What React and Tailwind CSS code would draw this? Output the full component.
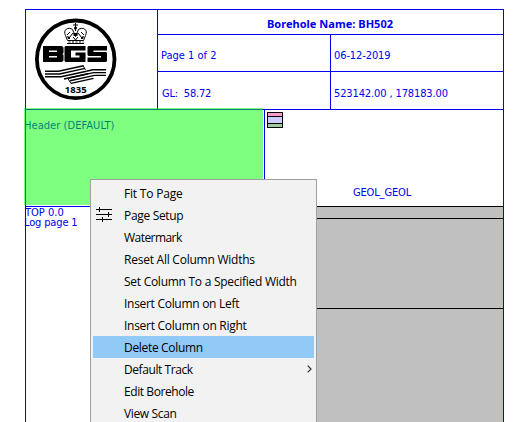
import React from "react";

const menuItems = [
  { label: "Fit To Page", tracking: "tracking-[-0.2px]" },
  { label: "Page Setup", tracking: "tracking-[-0.32px]", icon: true },
  { label: "Watermark", tracking: "tracking-[-0.55px]" },
  { label: "Reset All Column Widths", tracking: "tracking-[-0.24px]" },
  { label: "Set Column To a Specified Width", tracking: "tracking-[-0.27px]" },
  { label: "Insert Column on Left", tracking: "tracking-[-0.29px]" },
  { label: "Insert Column on Right", tracking: "tracking-[-0.27px]" },
  { label: "Delete Column", tracking: "tracking-[-0.32px]", active: true },
  { label: "Default Track", tracking: "tracking-[-0.42px]" , submenu: true },
  { label: "Edit Borehole", tracking: "tracking-[-0.42px]" },
  { label: "View Scan", tracking: "tracking-[-0.36px]" },
];

function Logo() {
  return (
    <svg width="82" height="83" viewBox="0 0 82 83" className="block">
      <circle cx="40.700" cy="41.300" r="38.800" fill="#fff" stroke="#000" strokeWidth="3.800" />
      <g fill="none" stroke="#000" strokeWidth="1">
        <path d="M32 25.500h17M32.500 22.500h16M32.500 22.500l-2-5c-3-6 3-9 7-6l3 7 3-7c4-3 10 0 7 6l-2 5" />
        <path d="M32 17l3-3M34 20l4-5M49 17l-3-3M47 20l-4-5M38 19l2.500 3 2.500-3M40.500 5v8M38 7h5" />
        <path d="M33.500 24h15" strokeDasharray="2 1.500" />
      </g>
      <g fill="#000">
        <circle cx="40.500" cy="10" r="1.500" />
        <path d="M38.500 15h4v3h-4zM32 18l3 1v2h-2zM49 18l-3 1v2h2z" />
      </g>
      <path
        fill="#000"
        fillRule="evenodd"
        d="M8 28h19l1.500 1.500v5.500l-1 1 1 1v5.500L27 44H8zM14 32.500v1.500h8v-1.500zM14 38v1.500h8V38zM30.500 28H50.500v4.500H36v7h8.500v-2h-4V34.500h10V44h-20l-1-1V29zM53.500 28H72v4.500H58.500v1.500h12.500l1 1v8l-1 1H52.500v-4.500H66v-1.500H53.500l-1-1v-8z"
      />
      <g fill="none" stroke="#000" strokeWidth="1.400">
        <path d="M10 53.200h13.500L48.500 47.700M10 56h14.500l25.500-5.600M10 58.800h16l25.500-5.600M29 61l24-5.200" />
        <path d="M71 51.800H57.500L51.500 53.200M71 54.600H58.500L34 60M71 57.400H59.500L35 62.800M36 65.400l22.500-5" />
        <path d="M48 47.500l2.500 4.500M32.500 60l3.500 5.500" strokeWidth="1" />
      </g>
      <text x="40.800" y="75.300" textAnchor="middle" textLength="22" className="font-['Open_Sans',sans-serif] text-[9.500px] font-bold">
        1835
      </text>
    </svg>
  );
}

function SlidersIcon() {
  return (
    <svg width="16" height="15" viewBox="0 0 16 15" className="block" shapeRendering="crispEdges" fill="none" stroke="#000">
      <path d="M0 2.500h16M0 7.500h16M0 12.500h16M3.500 0v5M12.500 5v5M6.500 10v5" />
    </svg>
  );
}

function ContextMenu() {
  return (
    <div className="absolute left-[90px] top-[179px] h-[243px] w-[227px] border border-b-0 border-[#a0a0a0] bg-[#f2f2f2] px-[2px] pt-[2px] font-['Open_Sans',sans-serif] text-[12px] text-black">
      {menuItems.map((item) => (
        <div key={item.label} className={`flex h-[22px] items-center ${item.active ? "bg-[#91c9f7]" : ""}`}>
          <div className="flex w-[31px] shrink-0 pl-[3px] pb-[1px]">{item.icon && <SlidersIcon />}</div>
          <span className={`whitespace-pre pt-[2px] leading-[22px] ${item.tracking}`}>{item.label}</span>
          {item.submenu && (
            <svg width="5" height="8" viewBox="0 0 5 8" className="-mt-[1px] ml-auto mr-[2px]" fill="none" stroke="#333" strokeWidth="1.200">
              <path d="M.7.700L4 4L.7 7.300" />
            </svg>
          )}
        </div>
      ))}
    </div>
  );
}

export default function App() {
  return (
    <div className="relative h-[422px] w-[520px] overflow-hidden bg-white pl-[25px] pt-[9px] font-['DejaVu_Sans_Condensed','DejaVu_Sans',sans-serif] text-[11px] leading-[13px] text-[#0000ee]">
      <div className="h-[413px] w-[479px] border-x border-t border-[#0000ee]">
        <div className="flex h-[100px] border-b border-[#0000ee]">
          <div className="w-[132px] shrink-0 border-r border-[#0000ee] pl-[9px] pt-[8px]">
            <Logo />
          </div>
          <div className="flex flex-1 flex-col">
            <div className="flex h-[25px] items-center justify-center border-b border-[#0000ee] pb-[1px] pt-[4px] font-['Noto_Sans',sans-serif] font-bold">
              <span className="whitespace-pre pr-[1px] tracking-[0.03px]">Borehole Name: BH502</span>
            </div>
            <div className="flex h-[37px] border-b border-[#0000ee]">
              <div className="flex w-[173px] items-center border-r border-[#0000ee] pl-[3px] pt-[4px]">Page 1 of 2</div>
              <div className="flex items-center pl-[3px] pt-[4px] tracking-[-0.1px]">06-12-2019</div>
            </div>
            <div className="flex flex-1">
              <div className="flex w-[173px] items-center whitespace-pre border-r border-[#0000ee] pl-[4px] pt-[5px] tracking-[-0.2px]">GL:  58.72</div>
              <div className="flex items-center whitespace-pre pl-[3px] pt-[5px] tracking-[-0.12px]">523142.00 , 178183.00</div>
            </div>
          </div>
        </div>
        <div className="flex h-[97px]">
          <div className="w-[239px] shrink-0 border-b border-r border-[#0000ee] pt-[9px]">
            <div className="-ml-[2px] whitespace-pre tracking-[0.06px]">Header (DEFAULT)</div>
          </div>
          <div className="flex-1 border-b border-black pl-[2px] pt-[2px]">
            <div className="flex h-[16px] w-[16px] flex-col border border-black">
              <div className="h-[3px] bg-[#ff99cc]" />
              <div className="h-[8px] border-y border-black bg-[#ccccff]" />
              <div className="h-[3px] bg-[#99cc99]" />
            </div>
            <div className="pl-[86px] pt-[58px] tracking-[-0.15px]">GEOL_GEOL</div>
          </div>
        </div>
        <div className="flex h-[215px]">
          <div className="w-[239px] shrink-0 border-r border-[#0000ee] pt-[1px] leading-[10px]">
            <div className="-ml-[1px]">TOP 0.0</div>
            <div className="-ml-[2px] tracking-[-0.15px]">Log page 1</div>
          </div>
          <div className="flex-1 bg-[#c0c0c0]">
            <div className="h-[12px] border-b border-black" />
            <div className="h-[90px] border-b border-black" />
          </div>
        </div>
      </div>
      <div className="absolute left-[24px] top-[108px] h-[97px] w-[239px] bg-[#00ff00]/50" />
      <ContextMenu />
    </div>
  );
}
